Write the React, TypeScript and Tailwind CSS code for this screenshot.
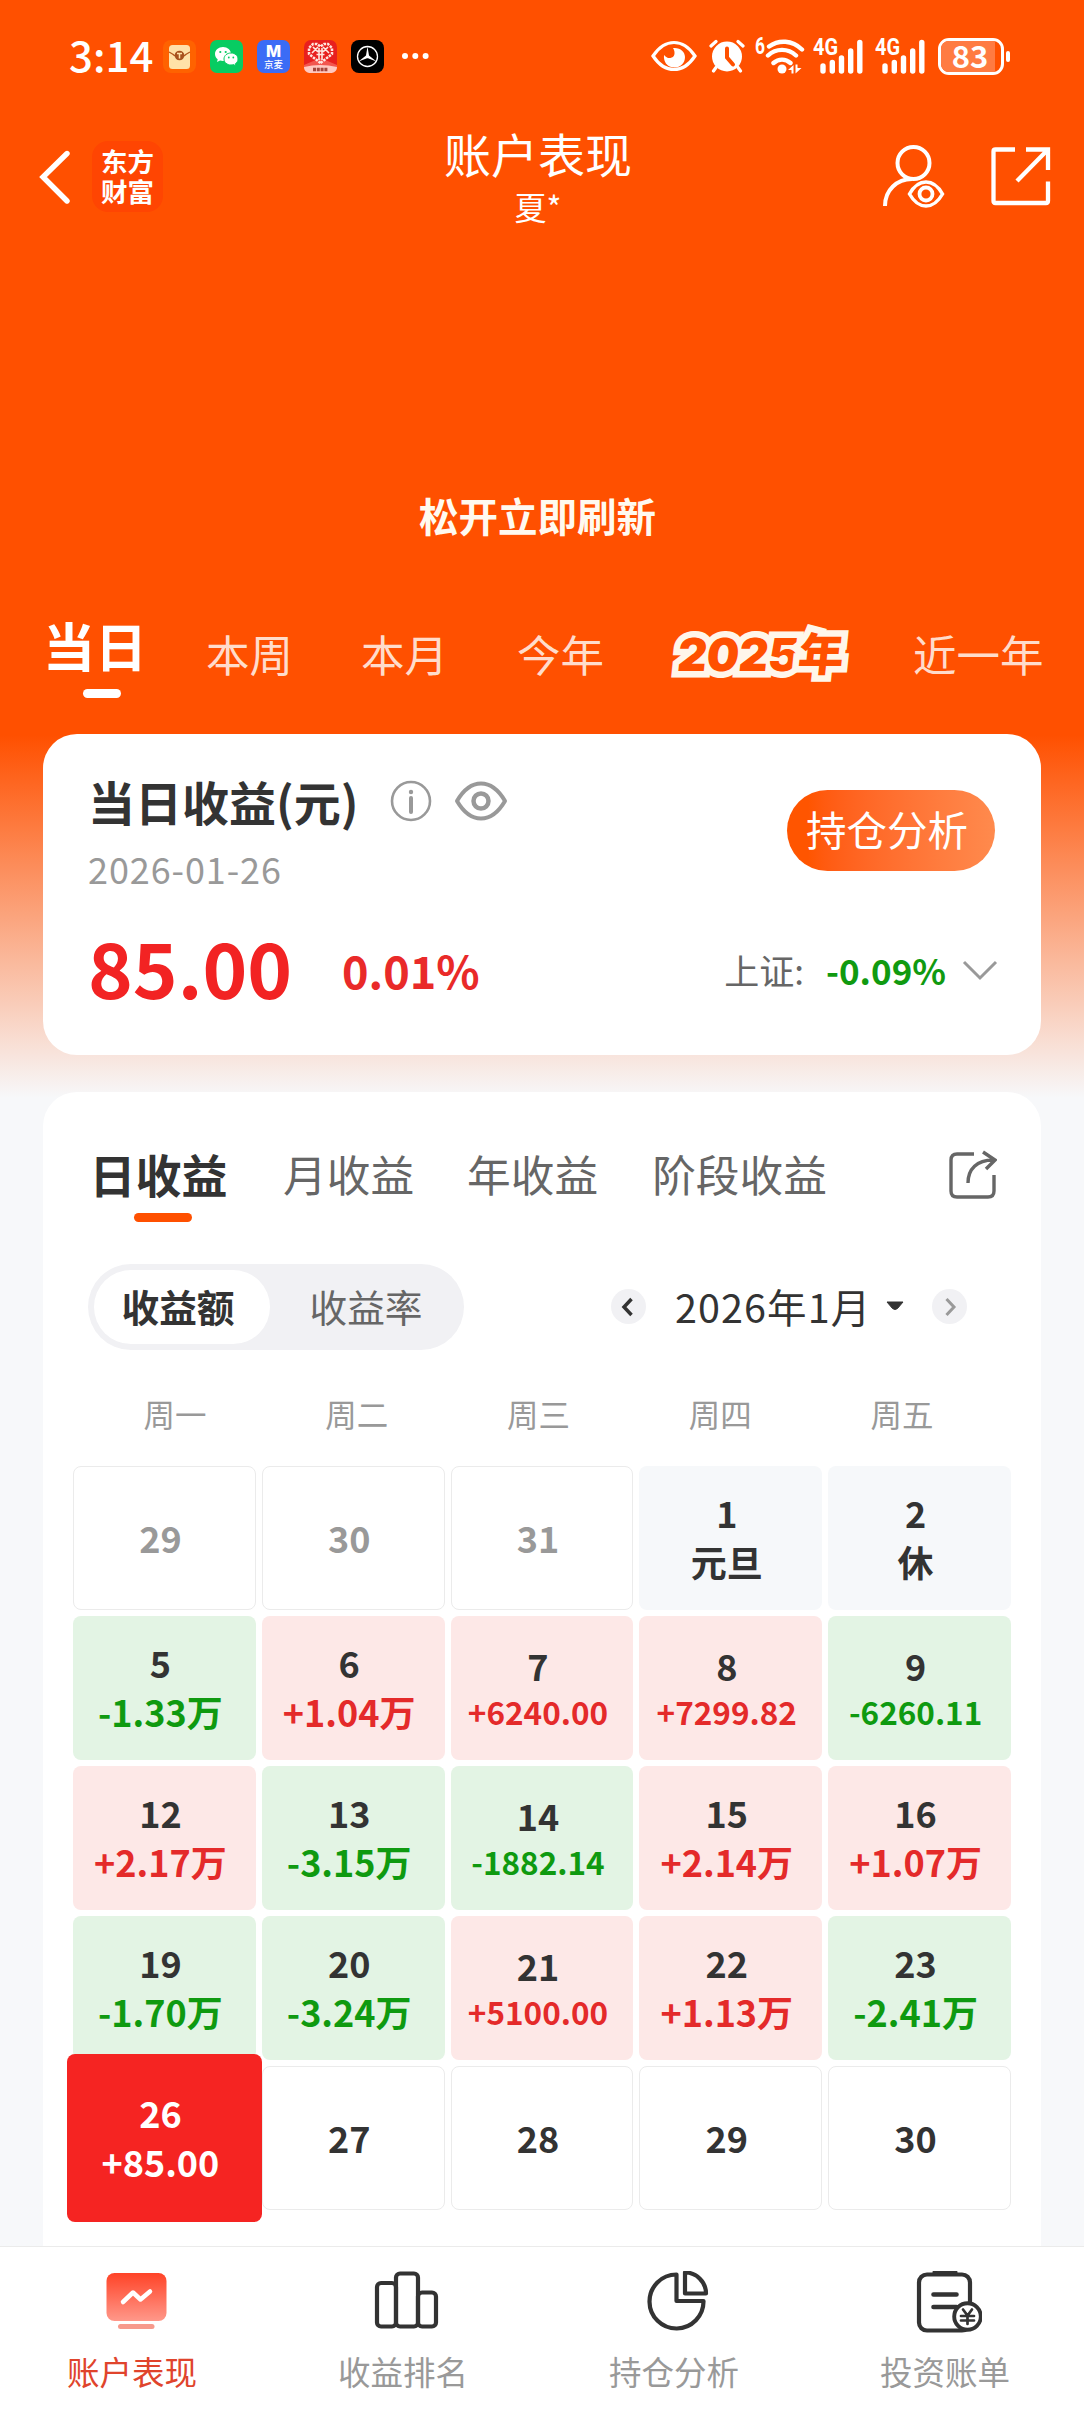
import React from "react";

type Tone = "up" | "down" | "rest" | "plain" | "muted" | "selected";
type Day = { day: string; value?: string; tone: Tone };

const days: Day[] = [
  { day: "29", tone: "muted" },
  { day: "30", tone: "muted" },
  { day: "31", tone: "muted" },
  { day: "1", value: "元旦", tone: "rest" },
  { day: "2", value: "休", tone: "rest" },
  { day: "5", value: "-1.33万", tone: "down" },
  { day: "6", value: "+1.04万", tone: "up" },
  { day: "7", value: "+6240.00", tone: "up" },
  { day: "8", value: "+7299.82", tone: "up" },
  { day: "9", value: "-6260.11", tone: "down" },
  { day: "12", value: "+2.17万", tone: "up" },
  { day: "13", value: "-3.15万", tone: "down" },
  { day: "14", value: "-1882.14", tone: "down" },
  { day: "15", value: "+2.14万", tone: "up" },
  { day: "16", value: "+1.07万", tone: "up" },
  { day: "19", value: "-1.70万", tone: "down" },
  { day: "20", value: "-3.24万", tone: "down" },
  { day: "21", value: "+5100.00", tone: "up" },
  { day: "22", value: "+1.13万", tone: "up" },
  { day: "23", value: "-2.41万", tone: "down" },
  { day: "26", value: "+85.00", tone: "selected" },
  { day: "27", tone: "plain" },
  { day: "28", tone: "plain" },
  { day: "29", tone: "plain" },
  { day: "30", tone: "plain" },
];

const cellTone: Record<Tone, string> = {
  up: "bg-[#fde8e7] text-[#333]",
  down: "bg-[#e3f4e4] text-[#333]",
  rest: "bg-[#f6f8fa] text-[#333]",
  plain: "border border-[#ebebeb] bg-white text-[#333]",
  muted: "border border-[#ebebeb] bg-white text-[#999]",
  selected: "z-10 -mx-1.5 -my-3 bg-[#f52422] text-white",
};

const valueTone: Record<Tone, string> = {
  up: "text-[#e42a2a]",
  down: "text-[#0f9a10]",
  rest: "",
  plain: "",
  muted: "",
  selected: "",
};

function DayCell({ day, value, tone }: Day) {
  const small = value !== undefined && value.length === 8;
  return (
    <div className={`flex flex-col items-center justify-center rounded-lg pr-2 font-bold ${small ? "pb-0.5" : ""} ${cellTone[tone]}`}>
      <span className="-mt-0.5 text-[36px] leading-[49px]">{day}</span>
      {value && (
        <span className={`whitespace-nowrap ${small ? "text-[31.5px] leading-[42px]" : "text-[36px] leading-[49px]"} ${valueTone[tone]}`}>
          {value}
        </span>
      )}
    </div>
  );
}

function Signal() {
  return (
    <svg className="h-[46px] w-[51px]" viewBox="0 -4 51 46">
      <text x="0" y="18" fontFamily="Roboto" fontSize="23" fontWeight="700" fill="#fff" textLength="25" lengthAdjust="spacingAndGlyphs">4G</text>
      <path d="M10 29v5M19.3 25.500v8.500M28.500 21v13M37.700 14v20M46.800 5.500v28.500" stroke="#fff" strokeWidth="5.400" strokeLinecap="round" />
    </svg>
  );
}

function StatusBar() {
  return (
    <div className="flex h-[112px] items-center pl-[69px] pr-[74px] text-white">
      <span className="-mt-1 w-[94px] text-[42px] font-medium leading-none">3:14</span>
      <div className="flex items-center gap-3.5">
        <svg className="size-[33px]" viewBox="0 0 33 33">
          <rect width="33" height="33" rx="8" fill="#ff6200" />
          <rect x="6" y="5" width="21" height="24" rx="3.500" fill="#ffe2a8" />
          <path d="M6 12q4 2 6 4M27 12q-4 2-6 4" stroke="#b4561c" strokeWidth="1.300" fill="none" />
          <circle cx="16.500" cy="15.500" r="4.800" fill="#a8521e" />
          <path d="M14 13.500h5M16.500 13.500v5" stroke="#ffe2a8" strokeWidth="1.500" />
        </svg>
        <svg className="size-[33px]" viewBox="0 0 33 33">
          <rect width="33" height="33" rx="7" fill="#07cc62" />
          <path d="M13 7C8.500 7 5 10 5 14c0 2.200 1 4 2.700 5.300L7 22l3-1.500c1 .3 2 .4 3 .4 4.500 0 8-3 8-6.900S17.500 7 13 7Z" fill="#fff" />
          <path d="M21 13c-4 0-7 2.600-7 6s3 6 7 6c1 0 1.800-.2 2.600-.4L26 26l-.6-2.300c1.600-1.100 2.600-2.700 2.600-4.700 0-3.400-3-6-7-6Z" fill="#fff" stroke="#07cc62" strokeWidth="1" />
          <g fill="#07cc62"><circle cx="10.300" cy="12" r="1.100" /><circle cx="15.700" cy="12" r="1.100" /><circle cx="18.800" cy="17.500" r=".9" /><circle cx="23.300" cy="17.500" r=".9" /></g>
        </svg>
        <div className="flex size-[33px] flex-col items-center rounded-[7px] bg-[#3b6cf6]">
          <span className="mt-[4px] font-[Inter] text-[16px] font-extrabold leading-[15px]">M</span>
          <span className="text-[9.500px] font-medium leading-[10px]">京麦</span>
        </div>
        <svg className="size-[33px]" viewBox="0 0 33 33">
          <rect width="33" height="33" rx="7" fill="#e8201e" />
          <path d="M0 25 16.500 18 33 25v2H0Z" fill="#f2564e" />
          <path d="M16.500 23 5 14V8l4-4h4l3.500 2.500L20 4h4l4 4v6Z" fill="none" stroke="#ffe6df" strokeWidth="2.500" strokeDasharray="2.500 1" />
          <path d="M9 7l5 5M8 13l6-6M19 7l6 6M19 12l5-5M12.500 11h8M12.500 14.500h8M15 8v12M18 8v12" stroke="#ffe6df" strokeWidth="1.600" />
          <path d="M0 27q16-4 33 0c0 4-3 6-7 6H7c-4 0-7-2-7-6Z" fill="#ffc9c0" />
          <path d="M9 29.500h15" stroke="#a5463c" strokeWidth="3.500" strokeDasharray="3 .8" />
        </svg>
        <svg className="size-[33px]" viewBox="0 0 33 33">
          <rect width="33" height="33" rx="8" fill="#000" />
          <circle cx="16.500" cy="16.500" r="10" fill="none" stroke="#fff" strokeWidth="1.300" />
          <path d="m16.500 6.500 1.500 9 7.500 6-8.500-3.200h-1L7.500 21.500l7.500-6Z" fill="#fff" />
        </svg>
      </div>
      <svg className="ml-[17px] h-2 w-7" viewBox="0 0 28 8" fill="#fff">
        <circle cx="4" cy="4" r="3" /><circle cx="14.300" cy="4" r="3" /><circle cx="24.600" cy="4" r="3" />
      </svg>
      <div className="ml-auto flex items-center">
        <svg className="h-8 w-[46px]" viewBox="0 0 46 32">
          <path d="M2 16C8 7 15 2.500 23 2.500S38 7 44 16c-6 9-13 13.500-21 13.500S8 25 2 16Z" fill="none" stroke="#fff" strokeWidth="3.200" />
          <path d="M22 8c7-.8 12 3.500 12 9 0 6-4.500 10.500-10.500 10.500-6 0-10-4-10.500-9.500-.1-1.500 0-2 .4-3 1.600 2.500 3.500 3.300 6 3 4-.6 5.600-5 2.600-10Z" fill="#fff" />
        </svg>
        <svg className="ml-3 h-[34px] w-9" viewBox="0 0 36 34" fill="none" stroke="#fff" strokeLinecap="round">
          <circle cx="18" cy="17.500" r="15" fill="#fff" stroke="none" />
          <path d="M2 7l5-4.500M34 7l-5-4.500M7 28.500l-2.500 3.500M29 28.500l2.500 3.500" strokeWidth="3.200" />
          <path d="M18 9.500v9l6 7" stroke="#ff5000" strokeWidth="4" />
        </svg>
        <svg className="ml-2.5 h-[46px] w-[50px]" viewBox="0 -4 50 46" fill="none" stroke="#fff" strokeLinecap="round">
          <text x="0" y="17" fontFamily="Roboto" fontSize="23" fontWeight="700" fill="#fff" stroke="none" textLength="10" lengthAdjust="spacingAndGlyphs">6</text>
          <path d="M14 9.500c10-7 23-6.500 33 3M13 18.500c8-7.500 20-7.500 28 0M18.500 26c5-4.500 12-4.500 17 0" strokeWidth="4.400" />
          <circle cx="27" cy="32" r="4.500" fill="#fff" stroke="none" />
          <path d="M33 33l5.500-5v8.500h-2V33ZM46.500 31h-4v-3.500h-2v9l6-5.500Z" fill="#fff" stroke="none" />
        </svg>
        <div className="ml-2 flex gap-[11px]"><Signal /><Signal /></div>
        <div className="ml-3 flex h-[37px] w-[66px] items-center rounded-[11px] border-[3px] border-white">
          <div className="flex h-full w-[54px] items-center justify-center rounded-l-lg bg-[#ff7b42] pl-1 text-[31px] font-bold leading-none">
            <span className="-mt-1">83</span>
          </div>
        </div>
        <div className="ml-0.5 h-[11px] w-[4px] rounded-full bg-white" />
      </div>
    </div>
  );
}

function Header() {
  return (
    <div className="flex h-[131px] items-center text-white">
      <div className="flex w-[300px] items-center pb-[2px] pl-[38px]">
        <svg className="h-[54px] w-8" viewBox="0 0 32 54">
          <path d="M29 3.500 5 27l24 24" fill="none" stroke="#fff" strokeWidth="5.400" strokeLinecap="round" />
        </svg>
        <div className="ml-[22px] flex size-[71px] items-center justify-center rounded-2xl bg-[#ff4502]">
          <span className="-mt-0.5 w-[53px] break-all text-[26.500px] font-bold leading-[30px]">东方财富</span>
        </div>
      </div>
      <div className="flex flex-1 flex-col items-center pr-2 pt-0.5">
        <h1 className="text-[47px] leading-[56px]">账户表现</h1>
        <span className="text-[32px] leading-[51px]">夏*</span>
      </div>
      <div className="flex w-[300px] items-center justify-end pb-[3px] pr-[33px]">
        <svg className="h-[63px] w-[63px]" viewBox="0 0 63 63" fill="none" stroke="#fff" strokeWidth="4">
          <circle cx="31.500" cy="18" r="16" />
          <path d="M3 61C3 45 15 34 30 34" />
          <path d="M27.500 49C32 41 38 37 44 37s12 4 16.500 12c-4.500 8-10.500 12-16.500 12s-12-4-16.500-12Z" strokeWidth="3.500" />
          <circle cx="44" cy="49" r="6.500" strokeWidth="3.800" />
        </svg>
        <svg className="ml-[46px] h-[60px] w-[60px]" viewBox="0 0 60 60" fill="none" stroke="#fff" strokeWidth="4.300">
          <path d="M24 3.500H4.500Q2.500 3.500 2.500 5.500V55q0 2 2 2H55q2 0 2-2V35.500M35 3.500h22V24M56 4.500 26 35" />
        </svg>
      </div>
    </div>
  );
}

function PeriodTabs() {
  return (
    <div className="mt-[74px] flex h-[123px] text-[43.500px] leading-[43px] text-[#ffdccb]">
      <div className="ml-[43px] flex w-[104px] flex-col items-center">
        <span className="whitespace-nowrap pt-[7px] text-[52px] font-bold leading-[54px] text-white">当日</span>
        <span className="ml-[14px] mt-[17px] h-[9px] w-[38px] rounded-full bg-white" />
      </div>
      <span className="ml-[59px] mt-[21px]">本周</span>
      <span className="ml-[68px] mt-[21px]">本月</span>
      <span className="ml-[69px] mt-[21px]">今年</span>
      <span className="ml-[71px] mt-[19px] w-[173px] -skew-x-6 whitespace-nowrap text-[45.500px] font-black text-[#ff5000] [-webkit-text-stroke:13px_#fff6ea] [paint-order:stroke_fill] [stroke-linejoin:round]">
        <span className="font-[Inter] tracking-[-0.200px]">2025</span>年
      </span>
      <span className="ml-[65px] mt-[21px] whitespace-nowrap">近一年</span>
    </div>
  );
}

function SummaryCard() {
  return (
    <section className="h-[321px] rounded-[34px] bg-white pl-[45px] pr-[46px]">
      <div className="flex h-[162px] justify-between">
        <div>
          <div className="flex items-center pt-[37px]">
            <h2 className="w-[285px] whitespace-nowrap text-[47px] font-bold leading-[60px] text-[#333]">当日收益(元)</h2>
            <svg className="ml-[17px] size-[42px]" viewBox="0 0 42 42" fill="none" stroke="#999" strokeWidth="2.600">
              <circle cx="21" cy="21" r="19" />
              <path d="M21 18v14" strokeWidth="4" strokeLinecap="round" />
              <circle cx="21" cy="12" r="2.200" fill="#999" stroke="none" />
            </svg>
            <svg className="ml-[22px] h-10 w-[54px]" viewBox="0 0 54 40" fill="none" stroke="#999" strokeWidth="4">
              <path d="M3 20C10 8 18 2.500 27 2.500S44 8 51 20c-7 12-15 17.500-24 17.500S10 32 3 20Z" strokeLinejoin="round" />
              <circle cx="27" cy="20" r="7.500" strokeWidth="4.500" />
            </svg>
          </div>
          <p className="mt-[17px] text-[36px] leading-[40px] tracking-[0.900px] text-[#999]">2026-01-26</p>
        </div>
        <button className="mt-14 h-[81px] w-[208px] rounded-full bg-linear-to-r from-[#ff5500] from-10% to-[#ff8a4d] pb-0.5 pr-2 text-[40.500px] leading-none text-white">
          持仓分析
        </button>
      </div>
      <div className="flex h-[146px] items-center">
        <span className="-mt-1.5 w-[254px] text-[76px] font-bold leading-none text-[#f22323]">85.00</span>
        <span className="text-[45px] font-bold leading-none text-[#e92a29]">0.01%</span>
        <span className="ml-auto text-[35px] leading-none text-[#666]">上证:</span>
        <span className="ml-[22px] w-[118px] whitespace-nowrap text-[35px] font-bold leading-none text-[#109a10]">-0.09%</span>
        <svg className="-mr-[3px] ml-[18px] mt-0.5 h-[22px] w-9" viewBox="0 0 36 22" fill="none" stroke="#999" strokeWidth="3">
          <path d="m2 3 16 16L34 3" />
        </svg>
      </div>
    </section>
  );
}

function CalendarCard() {
  return (
    <section className="mt-[37px] h-[1154px] rounded-t-[34px] bg-white">
      <div className="flex h-[172px] items-start pl-[47px] pr-[44px] pt-[56px] text-[43.700px] leading-[50px] text-[#666]">
        <div className="flex w-[137px] flex-col items-center">
          <span className="whitespace-nowrap text-[46px] font-bold text-[#333]">日收益</span>
          <span className="ml-[9px] mt-[15px] h-[9px] w-[58px] rounded-full bg-[#ff5000]" />
        </div>
        <span className="ml-[56px]">月收益</span>
        <span className="ml-[53px]">年收益</span>
        <span className="ml-[54px]">阶段收益</span>
        <svg className="ml-auto mt-0.5 h-[50px] w-[50px]" viewBox="0 0 50 50" fill="none" stroke="#666" strokeWidth="3.400">
          <path d="M27 4H10q-6 0-6 6v31q0 6 6 6h31q6 0 6-6V25" />
          <path d="M21 33c0-14 9-23 25-23M36 2l12 8-9 9" />
        </svg>
      </div>
      <div className="flex h-[86px] items-center pl-[45px] pr-[74px]">
        <div className="flex h-[86px] w-[376px] rounded-full bg-[#f1f1f4] p-1.5 text-[37.700px] leading-none">
          <div className="flex h-[74px] w-[176px] items-center justify-center whitespace-nowrap rounded-full bg-white pb-0.5 pr-2 font-bold text-[#333]">收益额</div>
          <div className="flex flex-1 items-center justify-center pb-0.5 pl-1 text-[#666]">收益率</div>
        </div>
        <svg className="-mt-0.5 ml-[147px] size-[35px]" viewBox="0 0 35 35" fill="none">
          <circle cx="17.500" cy="17.500" r="17.500" fill="#f1f1f4" />
          <path d="m20.500 10-7.500 8 7.500 8" stroke="#333" strokeWidth="3.500" />
        </svg>
        <span className="-mt-0.5 ml-[29px] whitespace-nowrap text-[39.500px] leading-none tracking-[1.100px] text-[#333]">2026年1月</span>
        <svg className="-mt-0.5 ml-auto h-[10px] w-[18px]" viewBox="0 0 18 10"><path d="M1 1h16l-5.500 6.500q-2.500 2-5 0Z" fill="#333" stroke="#333" strokeLinejoin="round" /></svg>
        <svg className="-mt-0.5 ml-[28px] size-[35px]" viewBox="0 0 35 35" fill="none">
          <circle cx="17.500" cy="17.500" r="17.500" fill="#f1f1f4" />
          <path d="m14.500 10 7.500 8-7.500 8" stroke="#999" strokeWidth="3" />
        </svg>
      </div>
      <div className="ml-[41px] mr-[48px] flex h-[116px] pt-[47px] text-[31.500px] leading-[32px] text-[#999]">
        {["周一", "周二", "周三", "周四", "周五"].map((d) => (
          <span key={d} className="flex-1 text-center">{d}</span>
        ))}
      </div>
      <div className="ml-[30px] mr-[30px] grid auto-rows-[144px] grid-cols-5 gap-1.5">
        {days.map((d, i) => (
          <DayCell key={i} {...d} />
        ))}
      </div>
    </section>
  );
}

function NavItem({ label, active, children }: { label: string; active?: boolean; children: React.ReactNode }) {
  return (
    <div className="flex flex-1 flex-col items-center pt-6">
      {children}
      <span className={`mt-[14px] pr-[7px] text-[32.500px] leading-[40px] ${active ? "text-[#e0442c]" : "text-[#999]"}`}>{label}</span>
    </div>
  );
}

function BottomNav() {
  return (
    <nav className="flex h-[166px] border-t border-[#ebebeb] bg-white">
      <NavItem label="账户表现" active>
        <svg className="h-[66px] w-[66px]" viewBox="0 0 66 66">
          <defs>
            <linearGradient id="screen" x1="0" y1="0" x2="0" y2="1">
              <stop offset="0" stopColor="#ff4327" />
              <stop offset="1" stopColor="#ff988a" />
            </linearGradient>
          </defs>
          <rect x="3.500" y="2" width="60" height="48" rx="8" fill="url(#screen)" />
          <path d="m20 31 10-9.500 7.500 7L47 20.500" fill="none" stroke="#fff" strokeWidth="4.500" strokeLinecap="round" strokeLinejoin="round" />
          <rect x="15" y="53" width="36.500" height="5" rx="2.500" fill="#f79a8c" />
        </svg>
      </NavItem>
      <NavItem label="收益排名">
        <svg className="h-[66px] w-[66px]" viewBox="0 0 66 66" fill="none" stroke="#333" strokeWidth="4.200">
          <rect x="3" y="12" width="19" height="43.500" rx="4" />
          <rect x="22" y="2.500" width="22" height="53" rx="4" />
          <rect x="44" y="21.500" width="18" height="34" rx="4" />
        </svg>
      </NavItem>
      <NavItem label="持仓分析">
        <svg className="h-[66px] w-[66px]" viewBox="0 0 66 66" fill="none" stroke="#333" strokeWidth="4.200" strokeLinejoin="round">
          <path d="M31.500 3.500A27 27 0 1 0 58.500 30H31.500Z" />
          <path d="M40 1.500A21 21 0 0 1 61 22.500h-21Z" />
        </svg>
      </NavItem>
      <NavItem label="投资账单">
        <svg className="h-[66px] w-[66px]" viewBox="0 0 66 66" fill="none" stroke="#333" strokeWidth="4.200" strokeLinecap="round">
          <rect x="3" y="3.500" width="51" height="56" rx="8" />
          <path d="M19 1.500h20" strokeWidth="5" />
          <path d="M17.500 23.500h23M17.500 36h23" strokeWidth="4.600" />
          <circle cx="51.500" cy="45.500" r="13.300" fill="#fff" strokeWidth="3.900" />
          <path d="m47 38.500 4.500 6 4.500-6M51.500 45v8M45 45h13M45 49.500h13" strokeWidth="2.700" />
        </svg>
      </NavItem>
    </nav>
  );
}

export default function App() {
  return (
    <div className="flex h-[2412px] w-[1084px] flex-col overflow-hidden bg-[#f7f8fa] bg-[linear-gradient(to_bottom,#ff5000_735px,#f7f8fa_1098px)] font-['Noto_Sans_CJK_SC',sans-serif]">
      <StatusBar />
      <Header />
      <div className="flex h-[294px] items-end justify-center pr-[9px]">
        <p className="text-[39.500px] font-bold leading-[44px] text-[#fffaf0]">松开立即刷新</p>
      </div>
      <PeriodTabs />
      <main className="mx-[43px]">
        <SummaryCard />
        <CalendarCard />
      </main>
      <BottomNav />
    </div>
  );
}
